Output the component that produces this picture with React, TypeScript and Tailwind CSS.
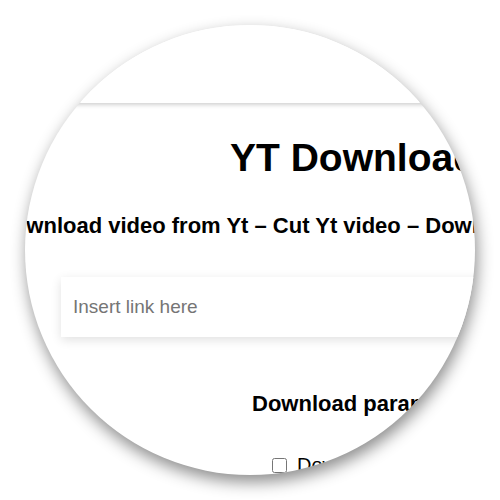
export default function App() {
  return (
    <div className="flex h-[500px] w-[500px] items-center justify-center bg-white font-['Liberation_Sans',Arial,sans-serif] text-black">
      {/* magnifier lens */}
      <div className="h-[450px] w-[450px] shrink-0 overflow-hidden rounded-full bg-white shadow-[2px_7px_16px_rgba(0,0,0,0.45)]">
        <div className="w-[700px]">
          <header className="relative z-10 h-[78px] bg-white shadow-[0_2px_4px_rgba(0,0,0,0.18)]" />

          <h1 className="ml-[205px] mt-[35px] whitespace-nowrap text-[39px] font-bold leading-none">
            YT Downloader
          </h1>

          <p className="ml-[-28px] mt-[38px] whitespace-nowrap text-[22px] font-bold leading-none">
            Download video from Yt – Cut Yt video – Download Yt audio
          </p>

          <div className="ml-[36px] mt-[40px] flex h-[60px] w-[620px] items-center bg-white pl-3 shadow-[0_3px_10px_rgba(0,0,0,0.12)]">
            <input
              type="text"
              placeholder="Insert link here"
              className="w-full bg-transparent text-[19px] text-black outline-none placeholder:text-[#757575]"
            />
          </div>

          <h2 className="ml-[227px] mt-[56px] whitespace-nowrap text-[22px] font-bold leading-none">
            Download parameters
          </h2>

          <label className="ml-[247px] mt-[40px] flex items-center gap-[10px] whitespace-nowrap text-[20px] leading-none">
            <input type="checkbox" className="h-[15px] w-[15px]" />
            Download audio only
          </label>
        </div>
      </div>
    </div>
  );
}
